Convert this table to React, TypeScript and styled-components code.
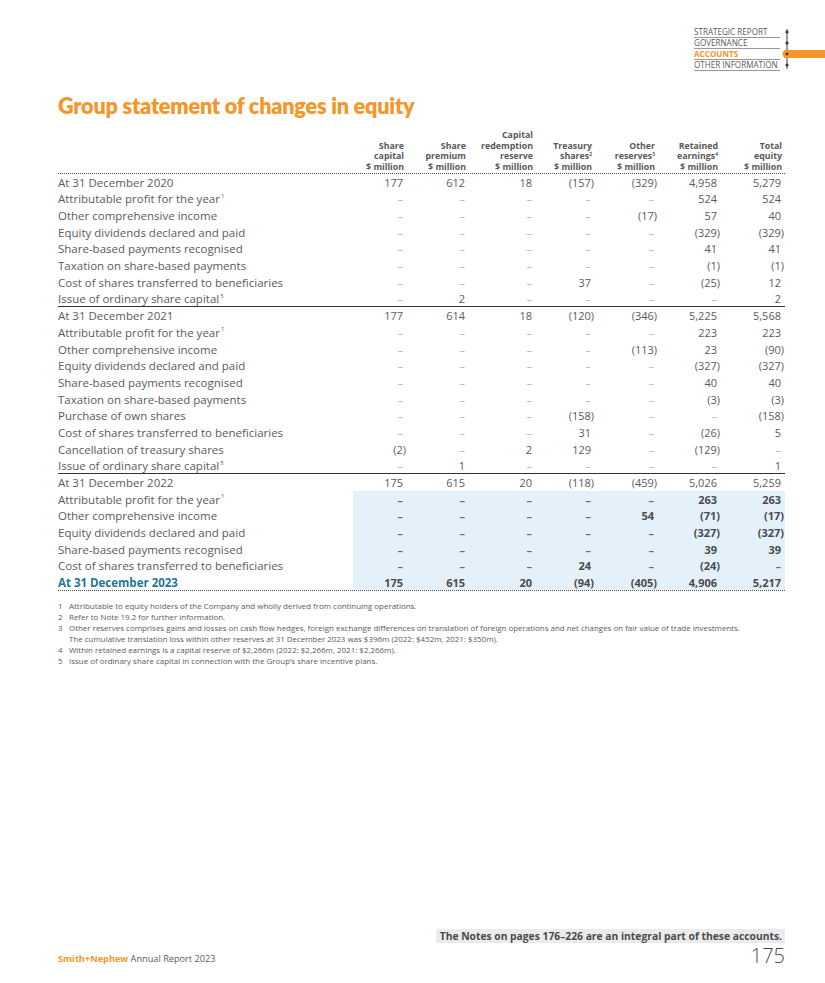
import React from 'react';
import styled, { createGlobalStyle } from 'styled-components';

const Global = createGlobalStyle`
  html, body { margin: 0; padding: 0; background: #ffffff; }
  body { font-family: "Open Sans", Lato, "DejaVu Sans", sans-serif; color: #5a5b5d; }
`;

const ORANGE = '#f4962a';
const BLUE = '#1b7898';
const HL = '#e4f1fb';

const Page = styled.div`
  width: 825px;
  height: 983px;
  box-sizing: border-box;
  display: flex;
  flex-direction: column;
  padding: 0 40px 16px 58px;
`;

const TopBar = styled.div`
  display: flex;
  justify-content: flex-end;
  align-items: flex-start;
  margin-right: -40px;
  padding-top: 27px;
`;

const NavList = styled.div`
  display: flex;
  flex-direction: column;
  width: 86px;
`;

const NavItem = styled.div<{ $active?: boolean }>`
  font-size: 8.1px;
  line-height: 10px;
  color: ${(p) => (p.$active ? ORANGE : '#5a5b5d')};
  font-weight: ${(p) => (p.$active ? 700 : 400)};
  border-bottom: 1px solid #9a9a9a;
  text-transform: uppercase;
  white-space: nowrap;
`;

const Marker = styled.svg`
  display: block;
  margin-left: 1px;
`;

const Title = styled.h1`
  margin: 22px 0 0 0;
  font-family: Lato, "Open Sans", sans-serif;
  font-size: 21.6px;
  line-height: 26px;
  font-weight: 800;
  color: ${ORANGE};
  letter-spacing: -0.2px;
`;

const COLS = '295px 54px 62px 67px 59px 63px 63px 64px';

const Table = styled.div`
  margin-top: 11px;
  width: 727px;
`;

const HeadRow = styled.div`
  display: grid;
  grid-template-columns: ${COLS};
  border-bottom: 1px dotted #555;
`;

const HeadCell = styled.div`
  align-self: end;
  text-align: right;
  padding-right: 3px;
  font-size: 8.8px;
  line-height: 10.7px;
  font-weight: 700;
  color: #58595b;
  white-space: nowrap;
`;

const HeadSup = styled.span`
  font-size: 5px;
  line-height: 5px;
  vertical-align: 3px;
`;

const Row = styled.div<{ $rule?: 'solid' | 'dotted' }>`
  display: grid;
  grid-template-columns: ${COLS};
  height: 16.7px;
  box-sizing: border-box;
  border-bottom: ${(p) =>
    p.$rule === 'solid' ? '1.5px solid #333' : p.$rule === 'dotted' ? '1px dotted #555' : 'none'};
`;

const Label = styled.div<{ $final?: boolean }>`
  display: flex;
  align-items: center;
  font-size: 11.5px;
  white-space: nowrap;
  font-weight: ${(p) => (p.$final ? 700 : 400)};
  color: ${(p) => (p.$final ? BLUE : '#5a5b5d')};
`;

const Sup = styled.span`
  font-size: 6px;
  line-height: 6px;
  align-self: flex-start;
  margin-top: 2px;
  margin-left: 1px;
`;

const Cell = styled.div<{ $hl?: boolean; $dash?: boolean }>`
  display: flex;
  align-items: center;
  justify-content: flex-end;
  padding-right: 4px;
  font-size: 11px;
  white-space: nowrap;
  background: ${(p) => (p.$hl ? HL : 'transparent')};
  font-weight: ${(p) => (p.$hl ? 700 : 400)};
  color: ${(p) => (p.$dash ? (p.$hl ? '#6a6b6d' : '#b4b5b7') : p.$hl ? '#4a4b4d' : '#5a5b5d')};
`;

const Num = styled.span<{ $neg?: boolean }>`
  margin-right: ${(p) => (p.$neg ? '-3px' : '0')};
`;

const Notes = styled.ol`
  list-style: none;
  margin: 10px 0 0 0;
  padding: 0;
  font-size: 7.95px;
  line-height: 11px;
  color: #5a5b5d;
`;

const Note = styled.li`
  display: grid;
  grid-template-columns: 11px 1fr;
  white-space: nowrap;
`;

const Spacer = styled.div`
  flex: 1;
`;

const NoteBox = styled.div`
  align-self: flex-end;
  background: #ebebeb;
  color: #4a4b4d;
  font-size: 10.3px;
  font-weight: 700;
  line-height: 14px;
  padding: 0 3px 0 4px;
  white-space: nowrap;
`;

const FootRow = styled.div`
  display: flex;
  justify-content: space-between;
  align-items: flex-end;
  margin-top: 2px;
`;

const Brand = styled.div`
  font-size: 9.2px;
  color: #5a5b5d;
  padding-bottom: 2px;
  b { color: ${ORANGE}; font-weight: 700; }
`;

const PageNum = styled.div`
  font-size: 20px;
  font-weight: 300;
  line-height: 22px;
  color: #4a4b4d;
`;

type R = { label: string; sup?: string; v: string[]; hl?: boolean; final?: boolean; rule?: 'solid' | 'dotted' };

const D = '–';
const rows: R[] = [
  { label: 'At 31 December 2020', v: ['177', '612', '18', '(157)', '(329)', '4,958', '5,279'] },
  { label: 'Attributable profit for the year', sup: '1', v: [D, D, D, D, D, '524', '524'] },
  { label: 'Other comprehensive income', v: [D, D, D, D, '(17)', '57', '40'] },
  { label: 'Equity dividends declared and paid', v: [D, D, D, D, D, '(329)', '(329)'] },
  { label: 'Share-based payments recognised', v: [D, D, D, D, D, '41', '41'] },
  { label: 'Taxation on share-based payments', v: [D, D, D, D, D, '(1)', '(1)'] },
  { label: 'Cost of shares transferred to beneficiaries', v: [D, D, D, '37', D, '(25)', '12'] },
  { label: 'Issue of ordinary share capital', sup: '5', v: [D, '2', D, D, D, D, '2'], rule: 'solid' },
  { label: 'At 31 December 2021', v: ['177', '614', '18', '(120)', '(346)', '5,225', '5,568'] },
  { label: 'Attributable profit for the year', sup: '1', v: [D, D, D, D, D, '223', '223'] },
  { label: 'Other comprehensive income', v: [D, D, D, D, '(113)', '23', '(90)'] },
  { label: 'Equity dividends declared and paid', v: [D, D, D, D, D, '(327)', '(327)'] },
  { label: 'Share-based payments recognised', v: [D, D, D, D, D, '40', '40'] },
  { label: 'Taxation on share-based payments', v: [D, D, D, D, D, '(3)', '(3)'] },
  { label: 'Purchase of own shares', v: [D, D, D, '(158)', D, D, '(158)'] },
  { label: 'Cost of shares transferred to beneficiaries', v: [D, D, D, '31', D, '(26)', '5'] },
  { label: 'Cancellation of treasury shares', v: ['(2)', D, '2', '129', D, '(129)', D] },
  { label: 'Issue of ordinary share capital', sup: '5', v: [D, '1', D, D, D, D, '1'], rule: 'solid' },
  { label: 'At 31 December 2022', v: ['175', '615', '20', '(118)', '(459)', '5,026', '5,259'] },
  { label: 'Attributable profit for the year', sup: '1', v: [D, D, D, D, D, '263', '263'], hl: true },
  { label: 'Other comprehensive income', v: [D, D, D, D, '54', '(71)', '(17)'], hl: true },
  { label: 'Equity dividends declared and paid', v: [D, D, D, D, D, '(327)', '(327)'], hl: true },
  { label: 'Share-based payments recognised', v: [D, D, D, D, D, '39', '39'], hl: true },
  { label: 'Cost of shares transferred to beneficiaries', v: [D, D, D, '24', D, '(24)', D], hl: true },
  { label: 'At 31 December 2023', v: ['175', '615', '20', '(94)', '(405)', '4,906', '5,217'], hl: true, final: true, rule: 'dotted' },
];

const heads: { lines: string[]; sup?: string }[] = [
  { lines: ['Share', 'capital', '$ million'] },
  { lines: ['Share', 'premium', '$ million'] },
  { lines: ['Capital', 'redemption', 'reserve', '$ million'] },
  { lines: ['Treasury', 'shares', '$ million'], sup: '2' },
  { lines: ['Other', 'reserves', '$ million'], sup: '3' },
  { lines: ['Retained', 'earnings', '$ million'], sup: '4' },
  { lines: ['Total', 'equity', '$ million'] },
];

export default function App() {
  return (
    <>
      <Global />
      <Page>
        <TopBar>
          <NavList>
            <NavItem>Strategic report</NavItem>
            <NavItem>Governance</NavItem>
            <NavItem $active>Accounts</NavItem>
            <NavItem>Other information</NavItem>
          </NavList>
          <Marker width="44" height="44" viewBox="0 0 44 44">
            <line x1="6" y1="2" x2="6" y2="42" stroke="#3a3a3a" strokeWidth="1" />
            <circle cx="6" cy="5" r="1.6" fill="#3a3a3a" />
            <circle cx="6" cy="16" r="1.6" fill="#3a3a3a" />
            <circle cx="6" cy="38" r="1.6" fill="#3a3a3a" />
            <rect x="6" y="23" width="38" height="8" fill={ORANGE} />
            <circle cx="6" cy="27" r="4.5" fill={ORANGE} />
            <circle cx="6" cy="27" r="1.4" fill="#3a3a3a" />
          </Marker>
        </TopBar>

        <Title>Group statement of changes in equity</Title>

        <Table>
          <HeadRow>
            <div />
            {heads.map((h, i) => (
              <HeadCell key={i}>
                {h.lines.map((l, j) => (
                  <div key={j}>
                    {l}
                    {h.sup && j === h.lines.length - 2 ? <HeadSup>{h.sup}</HeadSup> : null}
                  </div>
                ))}
              </HeadCell>
            ))}
          </HeadRow>
          {rows.map((r, i) => (
            <Row key={i} $rule={r.rule}>
              <Label $final={r.final}>
                {r.label}
                {r.sup ? <Sup>{r.sup}</Sup> : null}
              </Label>
              {r.v.map((v, j) => (
                <Cell key={j} $hl={r.hl} $dash={v === D}>
                  <Num $neg={v.endsWith(')')}>{v}</Num>
                </Cell>
              ))}
            </Row>
          ))}
        </Table>

        <Notes>
          <Note><span>1</span><span>Attributable to equity holders of the Company and wholly derived from continuing operations.</span></Note>
          <Note><span>2</span><span>Refer to Note 19.2 for further information.</span></Note>
          <Note>
            <span>3</span>
            <span>
              Other reserves comprises gains and losses on cash flow hedges, foreign exchange differences on translation of foreign operations and net changes on fair value of trade investments.
              <br />
              The cumulative translation loss within other reserves at 31 December 2023 was $396m (2022: $452m, 2021: $350m).
            </span>
          </Note>
          <Note><span>4</span><span>Within retained earnings is a capital reserve of $2,266m (2022: $2,266m, 2021: $2,266m).</span></Note>
          <Note><span>5</span><span>Issue of ordinary share capital in connection with the Group’s share incentive plans.</span></Note>
        </Notes>

        <Spacer />

        <NoteBox>The Notes on pages 176–226 are an integral part of these accounts.</NoteBox>
        <FootRow>
          <Brand><b>Smith+Nephew</b> Annual Report 2023</Brand>
          <PageNum>175</PageNum>
        </FootRow>
      </Page>
    </>
  );
}
